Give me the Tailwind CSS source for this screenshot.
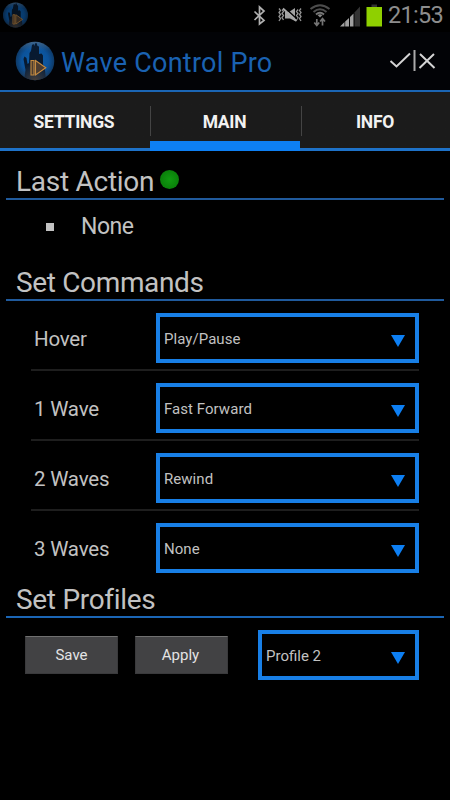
<!DOCTYPE html>
<html lang="en">
<head>
<meta charset="utf-8">
<title>Wave Control Pro</title>
<script src="https://cdn.jsdelivr.net/npm/@tailwindcss/browser@4"></script>
</head>
<body class="w-[450px] h-[800px] overflow-hidden bg-black font-['Roboto',sans-serif] text-[#c2c2c2]">
<svg width="0" height="0" class="absolute">
  <defs>
    <radialGradient id="orb" cx=".5" cy=".5" r=".52"><stop offset="0" stop-color="#0f62ac"/><stop offset=".65" stop-color="#0b529a"/><stop offset="1" stop-color="#0f3358"/></radialGradient>
    <linearGradient id="shine" x1="0" y1="0" x2="0" y2="1"><stop offset="0" stop-color="#8aa4bc" stop-opacity=".45"/><stop offset=".25" stop-color="#6088b0" stop-opacity="0"/></linearGradient>
    <radialGradient id="base" cx=".5" cy="1" r=".45"><stop offset="0" stop-color="#4a4038"/><stop offset="1" stop-color="#30435c" stop-opacity="0"/></radialGradient>
    <symbol id="logo" viewBox="0 0 40 40">
      <clipPath id="c"><circle cx="20" cy="20" r="19.3"/></clipPath>
      <g clip-path="url(#c)">
        <rect width="40" height="40" fill="url(#orb)"/>
        <rect width="40" height="40" fill="url(#shine)"/>
        <path d="M9 40 10.500 29 8.500 18 9.500 15.500 11.500 17 12.500 23 14 22 14.500 12 16 10 17 4 18.500 3 19.500 5 20 2.500 21.500 2 22.500 5 24 5.500 24 13 26.500 12.500 28 14.500 28 23 30 29 31 40Z" fill="#081a30"/>
        <rect width="40" height="40" fill="url(#base)"/>
      </g>
      <path d="M16 19.500h3v14.500h-3zM20.500 19.500 30.800 26.800 20.500 34Z" fill="#4b3c30" stroke="#c48a40" stroke-width="1.100"/>
    </symbol>
  </defs>
</svg>

<div class="flex h-8 items-start">
  <svg class="ml-[2px] mt-[2px] h-[26px] w-[27px] opacity-70"><use href="#logo"/></svg>
  <svg class="ml-[222px] h-8 w-[134px]" viewBox="251 0 134 32" fill="none">
    <path d="M254.500 11.500 264 20.500 259.500 24V7L264 11 254.500 20" stroke="#b0b0b0" stroke-width="1.700"/>
    <g stroke="#929292" stroke-width="1.300">
      <path d="M279 8.500 280.500 10.500 279 12.500 280.500 14.500 279 16.500 280.500 18.500 279 21M282 9.500 283.500 11.500 282 13.500 283.500 15.500 282 17.500 283.500 20M301 8.500 299.500 10.500 301 12.500 299.500 14.500 301 16.500 299.500 18.500 301 21M298 9.500 296.500 11.500 298 13.500 296.500 15.500 298 17.500 296.500 20"/>
      <path d="M285 12h4L295 8V21L290 18.500H285Z" fill="#a2a2a2" stroke="none"/>
      <path d="M284.500 7.500 297 19" stroke="#000" stroke-width="1.500"/>
      <path d="M283 8.500 296.500 21" stroke="#a8a8a8" stroke-width="1.800"/>
    </g>
    <g stroke="#4c4c4c" stroke-width="2">
      <path d="M310.500 9Q320 1.500 329.500 9M313.500 12Q320 6.500 326.500 12"/>
      <path d="M316 14.500Q320 11 324 14.500" stroke="#777"/>
    </g>
    <path d="M317.500 15Q320 13.500 322.500 15L320 17.500Z" fill="#888"/>
    <path d="M316.800 19V25M314.300 22.500 316.800 25.500 319.200 22.500M322.500 25.500V19M320.200 21.500 322.500 18.500 325 21.500" stroke="#747474" stroke-width="1.700"/>
    <path d="M340 26.500 344.500 22V26.500ZM345.200 21.500 349 18V26.500H345.200ZM350 17 353.500 13.500V26.500H350Z" fill="#a0a0a0"/>
    <path d="M354.500 12.500 360 6.500V26.500H354.500Z" fill="#333"/>
    <path d="M371.500 4.500h5.500V7h-5.500z" fill="#333"/>
    <path d="M366.500 7H382V26.500H366.500Z" fill="#8fd000"/>
  </svg>
  <div class="ml-[3px] text-[23.500px] leading-[30px] tracking-[-0.700px] text-[#8d8d8d]">21:53</div>
</div>

<header class="flex h-[58px] items-center bg-[#020306]">
  <svg class="-mt-[1px] ml-[15px] h-10 w-10"><use href="#logo"/></svg>
  <h1 class="ml-[6px] pt-[3px] text-[27px] leading-8 tracking-[0.250px] text-[#1a62b2]">Wave Control Pro</h1>
  <svg class="ml-auto mr-[12px] h-8 w-[50px]" viewBox="388 45 50 32" fill="none" stroke="#d4d4d4" stroke-width="2">
    <path d="M390.500 61 396.500 66.500 410 53.500M420 54 434.500 68M434 54 419.500 68"/><path d="M414.500 50V71" stroke="#aaa"/>
  </svg>
</header>

<nav class="grid h-[62px] grid-cols-3 items-start border-t-2 border-[#1b66b5] bg-linear-to-b from-[#1b1b1b] from-[58px] to-black to-[58px] text-[17.500px] font-bold leading-[60px] tracking-[-0.250px] text-[#f2f2f2]">
  <div class="h-[59px] border-b-[3px] border-[#1e72c8] pr-[2px] text-center">SETTINGS</div>
  <div class="relative h-[59px] border-b-[10px] border-[#0d7ff3] pr-px text-center before:absolute before:left-0 before:top-[14px] before:h-[30px] before:w-px before:bg-[#444]">MAIN</div>
  <div class="relative h-[59px] border-b-[3px] border-[#1e72c8] text-center before:absolute before:left-[1px] before:top-[14px] before:h-[30px] before:w-px before:bg-[#444]">INFO</div>
</nav>

<main class="px-[6px]">
  <h2 class="flex h-12 items-end border-b-2 border-[#205a9c] pl-[10px] text-[28px] leading-8 tracking-[-0.270px]"><span>Last Action</span><span class="mb-[9px] ml-[6px] size-[19px] rounded-full bg-radial from-[#109b10] to-[#087508]"></span></h2>
  <div class="flex h-[54px] items-center pl-[40px] text-[23px] tracking-[-0.500px]"><span class="size-2 bg-[#c2c2c2]"></span><span class="ml-[27px]">None</span></div>
  <h2 class="mt-[14px] flex h-[33px] items-end border-b-2 border-[#205a9c] pl-[10px] text-[28px] leading-8 tracking-[-0.350px]">Set Commands</h2>

  <section class="pl-[25px] pr-[25px]">
    <div class="flex h-[70px] items-center border-b-2 border-[#1e1e1e] pt-[6px] pl-[3px] text-[20.500px] tracking-[-0.200px]"><span class="w-[122px] pt-[2px]">Hover</span><div class="flex h-[50px] w-[263px] items-center justify-between border-4 border-[#187fe6] pl-1 pr-[10px] text-[15px] tracking-[0.050px]"><span class="pt-[2px]">Play/Pause</span><svg class="mt-[5px] h-3 w-[14px] fill-[#0d7ff3]"><path d="M0 0H14L7 12Z"/></svg></div></div>
    <div class="flex h-[70px] items-center border-b-2 border-[#1e1e1e] pt-[6px] pl-[3px] text-[20.500px] tracking-[-0.200px]"><span class="w-[122px] pt-[2px]">1 Wave</span><div class="flex h-[50px] w-[263px] items-center justify-between border-4 border-[#187fe6] pl-1 pr-[10px] text-[15px] tracking-[0.050px]"><span class="pt-[2px]">Fast Forward</span><svg class="mt-[5px] h-3 w-[14px] fill-[#0d7ff3]"><path d="M0 0H14L7 12Z"/></svg></div></div>
    <div class="flex h-[70px] items-center border-b-2 border-[#1e1e1e] pt-[6px] pl-[3px] text-[20.500px] tracking-[-0.200px]"><span class="w-[122px] pt-[2px]">2 Waves</span><div class="flex h-[50px] w-[263px] items-center justify-between border-4 border-[#187fe6] pl-1 pr-[10px] text-[15px] tracking-[0.050px]"><span class="pt-[2px]">Rewind</span><svg class="mt-[5px] h-3 w-[14px] fill-[#0d7ff3]"><path d="M0 0H14L7 12Z"/></svg></div></div>
    <div class="flex h-[70px] items-center border-b-2 border-transparent pt-[6px] pl-[3px] text-[20.500px] tracking-[-0.200px]"><span class="w-[122px] pt-[2px]">3 Waves</span><div class="flex h-[50px] w-[263px] items-center justify-between border-4 border-[#187fe6] pl-1 pr-[10px] text-[15px] tracking-[0.050px]"><span class="pt-[2px]">None</span><svg class="mt-[5px] h-3 w-[14px] fill-[#0d7ff3]"><path d="M0 0H14L7 12Z"/></svg></div></div>
  </section>

  <h2 class="flex h-[37px] items-end border-b-2 border-[#1b66b5] pl-[10px] text-[28px] leading-8 tracking-[-0.300px]">Set Profiles</h2>
  <div class="flex items-center pl-[19px] pr-[25px] pt-3 text-[15px]">
    <button class="h-[38px] w-[93px] border border-[#3a3a3c] border-t-[#707070] bg-[#424244] pt-px text-[#e4e4e4]">Save</button>
    <button class="ml-[17px] h-[38px] w-[93px] border border-[#3a3a3c] border-t-[#707070] bg-[#424244] pt-px pr-[2px] text-[#e4e4e4]">Apply</button>
    <div class="ml-auto flex h-[50px] w-[161px] items-center justify-between border-4 border-[#187fe6] pl-1 pr-[10px]"><span class="pt-[2px]">Profile 2</span><svg class="mt-[5px] h-3 w-[14px] fill-[#0d7ff3]"><path d="M0 0H14L7 12Z"/></svg></div>
  </div>
</main>
</body>
</html>
